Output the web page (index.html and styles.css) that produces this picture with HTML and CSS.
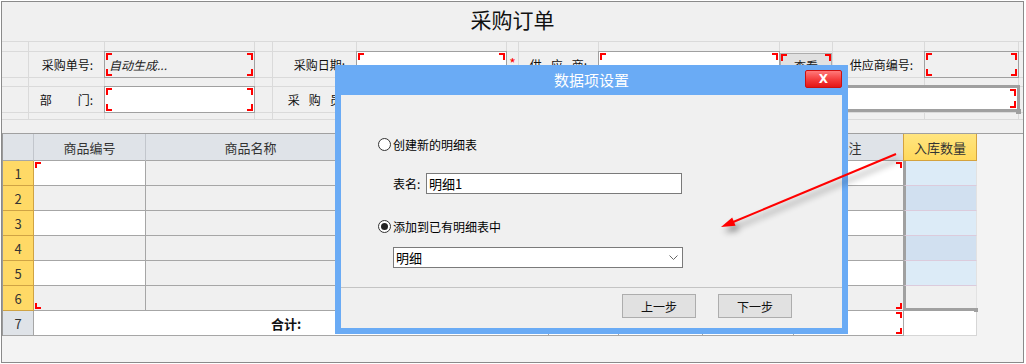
FILE: index.html
```html
<!DOCTYPE html>
<html lang="zh-CN">
<head>
<meta charset="utf-8">
<title>采购订单</title>
<link rel="stylesheet" href="styles.css">
</head>
<body>
<div class="frame">
  <div class="title">采购订单</div>

  <div class="form">
    <div class="c"></div><div class="c"></div><div class="c"></div><div class="c"></div><div class="c"></div><div class="c"></div><div class="c"></div><div class="c"></div><div class="c"></div><div class="c"></div><div class="c"></div><div class="c"></div><div class="c"></div>

    <div class="c"></div>
    <div class="lbl">采购单号:</div>
    <div class="inp ro"><i class="cn tl"></i><i class="cn tr"></i><i class="cn bl"></i><i class="cn br"></i><em class="auto">自动生成...</em></div>
    <div class="c"></div>
    <div class="lbl">采购日期:</div>
    <div class="inp"><i class="cn tl"></i><i class="cn tr"></i><i class="cn bl"></i><i class="cn br"></i></div>
    <div class="c ast">*</div>
    <div class="lbl"><span class="ls9">供应</span>商:</div>
    <div class="inp"><i class="cn tl"></i><i class="cn tr"></i><i class="cn bl"></i><i class="cn br"></i></div>
    <div class="c pad"><div class="btn"><i class="cn tl edge"></i><i class="cn tr edge"></i><i class="cn bl edge"></i><i class="cn br edge"></i>查看</div></div>
    <div class="lbl">供应商编号:</div>
    <div class="inp ro"><i class="cn tl"></i><i class="cn tr"></i><i class="cn bl"></i><i class="cn br"></i></div>
    <div class="c"></div>

    <div class="c"></div><div class="c"></div><div class="c"></div><div class="c"></div><div class="c"></div><div class="c"></div><div class="c"></div><div class="c"></div><div class="c"></div><div class="c"></div><div class="c"></div><div class="c"></div><div class="c"></div>

    <div class="c"></div>
    <div class="lbl"><span class="ls26">部</span>门:</div>
    <div class="inp"><i class="cn tl"></i><i class="cn tr"></i><i class="cn bl"></i><i class="cn br"></i></div>
    <div class="c"></div>
    <div class="lbl"><span class="ls9">采购</span>员:</div>
    <div class="inp"><i class="cn tl"></i><i class="cn tr"></i><i class="cn bl"></i><i class="cn br"></i></div>
    <div class="c"></div>
    <div class="inp sel"><i class="cn tl"></i><i class="cn tr"></i><i class="cn bl"></i><i class="cn br"></i><i class="handle"></i></div>
    <div class="c"></div>

    <div class="c"></div><div class="c"></div><div class="c"></div><div class="c"></div><div class="c"></div><div class="c"></div><div class="c"></div><div class="c"></div><div class="c"></div><div class="c"></div><div class="c"></div><div class="c"></div><div class="c"></div>
  </div>

  <div class="grid">
    <div class="g hd"></div><div class="g hd">商品编号</div><div class="g hd">商品名称</div><div class="g hd"></div><div class="g hd"></div><div class="g hd"></div><div class="g hd"></div><div class="g hd"></div><div class="g hd">备注</div><div class="g hdy">入库数量</div>

    <div class="g rn">1</div><div class="g w"><i class="cn tl"></i></div><div class="g gr"></div><div class="g w"></div><div class="g w"></div><div class="g w"></div><div class="g w"></div><div class="g w"></div><div class="g w"><i class="cn tr"></i></div><div class="g q qa"></div>
    <div class="g rn">2</div><div class="g gr"></div><div class="g gr"></div><div class="g gr"></div><div class="g gr"></div><div class="g gr"></div><div class="g gr"></div><div class="g gr"></div><div class="g gr"></div><div class="g q qb"></div>
    <div class="g rn">3</div><div class="g w"></div><div class="g gr"></div><div class="g w"></div><div class="g w"></div><div class="g w"></div><div class="g w"></div><div class="g w"></div><div class="g w"></div><div class="g q qa"></div>
    <div class="g rn">4</div><div class="g gr"></div><div class="g gr"></div><div class="g gr"></div><div class="g gr"></div><div class="g gr"></div><div class="g gr"></div><div class="g gr"></div><div class="g gr"></div><div class="g q qb"></div>
    <div class="g rn">5</div><div class="g w"></div><div class="g gr"></div><div class="g w"></div><div class="g w"></div><div class="g w"></div><div class="g w"></div><div class="g w"></div><div class="g w"></div><div class="g q qa"></div>
    <div class="g rn">6</div><div class="g gr"><i class="cn bl"></i></div><div class="g gr"></div><div class="g gr"></div><div class="g gr"></div><div class="g gr"></div><div class="g gr"></div><div class="g gr"></div><div class="g gr"><i class="cn br"></i></div><div class="g q qc"><i class="handle2"></i></div>
    <div class="g rn rn7">7</div><div class="g w sum">合计:</div><div class="g w"></div><div class="g w"></div><div class="g w"></div><div class="g w"><i class="cn tr"></i><i class="cn br"></i></div><div class="g tw"></div>
  </div>

  <div class="bottom"></div>
</div>

<div class="dialog">
  <div class="dlg-title">
    <span></span>
    <span class="dlg-caption">数据项设置</span>
    <span class="dlg-close">X</span>
  </div>
  <div class="dlg-body">
    <div class="dlg-content">
      <div class="radio-row"><span class="radio"></span>创建新的明细表</div>
      <div class="field-row"><span class="field-lbl">表名:</span><span class="textbox">明细1</span></div>
      <div class="radio-row second"><span class="radio on"></span>添加到已有明细表中</div>
      <div class="select">明细<svg class="chev" width="9" height="5" viewBox="0 0 9 5"><polyline points="0.5,0.5 4.5,4.5 8.5,0.5" fill="none" stroke="#666" stroke-width="1"/></svg></div>
    </div>
    <div class="dlg-footer"><span class="dbtn">上一步</span><span class="dbtn">下一步</span></div>
  </div>
</div>

<svg class="arrow" width="1026" height="364" viewBox="0 0 1026 364">
  <line x1="896" y1="154" x2="732" y2="222.5" stroke="#ff0000" stroke-width="2"/>
  <polygon points="721,227 735.6,225.8 732.2,217.4" fill="#ff0000"/>
</svg>
</body>
</html>
```

FILE: styles.css
```css
* { box-sizing: border-box; }
html, body { margin: 0; padding: 0; background: #fff; }
body {
  position: relative;
  width: 1026px;
  height: 364px;
  overflow: hidden;
  font-family: "Noto Sans CJK SC", "Noto Sans", sans-serif;
  font-size: 12px;
  color: #1a1a1a;
}

.frame {
  margin: 1px 0 0 1px;
  width: 1023px;
  height: 362px;
  border: 1px solid #8a8a8a;
  background: #f0f0f0;
  display: flex;
  flex-direction: column;
}

.title {
  flex: none;
  height: 39px;
  line-height: 34px;
  text-align: center;
  font-size: 21px;
  color: #111;
}

/* ---------- form grid ---------- */
.form {
  flex: none;
  display: grid;
  grid-template-columns: 26px 75px 149px 17px 83px 149px 11px 79px 180px 52px 91px 93px 4px;
  grid-template-rows: 9px 25px 8px 25px 6px;
  gap: 1px;
  padding: 1px 0;
  background: #dadada;
}
.c { background: #f0f0f0; }
.c.pad { padding-top: 1px; }
.lbl {
  background: #f0f0f0;
  display: flex;
  align-items: center;
  justify-content: flex-end;
  padding-right: 11px;
  white-space: nowrap;
  color: #111;
}
.ls9 { letter-spacing: 9px; }
.ls26 { letter-spacing: 26px; }
.ast {
  color: #ff0000;
  font-size: 14px;
  line-height: 14px;
  text-align: center;
  padding-top: 4px;
}

.inp {
  position: relative;
  margin: -1px;
  border: 1px solid #a0a0a0;
  background: #fff;
  display: flex;
  align-items: center;
  padding-left: 4px;
}
.inp.ro { background: #f0f0f0; }
.auto { font-style: italic; color: #222; }
.inp.sel {
  grid-column: span 5;
  margin: -2px -2px 0 -1px;
  border: 3px solid #a0a0a0;
}
.handle {
  position: absolute;
  right: -4px;
  bottom: -5px;
  width: 5px;
  height: 5px;
  background: #a0a0a0;
}

.btn {
  position: relative;
  height: 100%;
  border: 1px solid #adadad;
  background: #e1e1e1;
  display: flex;
  align-items: center;
  justify-content: center;
  color: #222;
}

/* red corner marks */
.cn {
  position: absolute;
  width: 6px;
  height: 7px;
  border: 0 solid #ff0000;
}
.tl { top: 1px; left: 1px; border-top-width: 2px; border-left-width: 2px; }
.tr { top: 1px; right: 1px; border-top-width: 2px; border-right-width: 2px; }
.bl { bottom: 1px; left: 1px; border-bottom-width: 2px; border-left-width: 2px; }
.br { bottom: 1px; right: 1px; border-bottom-width: 2px; border-right-width: 2px; }
.cn.edge.tl, .cn.edge.tr { top: 0; }
.cn.edge.bl, .cn.edge.br { bottom: 0; }
.cn.edge.tl, .cn.edge.bl { left: 0; }
.cn.edge.tr, .cn.edge.br { right: 0; }

/* ---------- detail table ---------- */
.grid {
  flex: none;
  margin-top: 13px;
  display: grid;
  grid-template-columns: 31px 112px 210px 93px 100px 70px 84px 91px 110px 73px;
  grid-template-rows: 27px repeat(7, 25px);
  border-top: 1px solid #a0a0a0;
  border-left: 1px solid #9a9a9a;
  background: #f3f3f3;
}
.g {
  position: relative;
  border-right: 1px solid #a6a6a6;
  border-bottom: 1px solid #a6a6a6;
}
.g .cn { width: 6px; height: 6px; }
.hd {
  background: #dfe3e8;
  border-right-color: #c2c6cc;
  border-bottom-color: #a6a6a6;
  color: #333;
  font-size: 13px;
  display: flex;
  align-items: center;
  justify-content: center;
}
.hdy {
  margin-left: -1px;
  border: 1px solid #d4a23e;
  border-top: 0;
  background: linear-gradient(#ffe580, #ffd95c);
  color: #333;
  font-size: 13px;
  display: flex;
  align-items: center;
  justify-content: center;
}
.rn {
  background: #ffd966;
  border-right-color: #cfa344;
  border-bottom-color: #cfa344;
  color: #333;
  font-size: 13px;
  display: flex;
  align-items: center;
  justify-content: center;
}
.rn7 {
  background: #dfe3e8;
  border-right-color: #a6a6a6;
  border-bottom-color: #a6a6a6;
}
.w { background: #fff; }
.gr { background: #f0f0f0; }
.sum {
  grid-column: span 4;
  display: flex;
  align-items: center;
  justify-content: flex-start;
  padding-left: 237px;
  font-weight: bold;
  font-size: 13px;
  color: #111;
}
.q {
  margin-left: -1px;
  border-left: 3px solid #a0a0a0;
  border-right-color: #e2e2e2;
  border-bottom-color: #dccbdc;
}
.qa { background: #dcebf7; }
.qb { background: #d1e0f0; }
.qc {
  z-index: 1;
  background: #f0f0f0;
  border-bottom: 3px solid #a0a0a0;
}
.handle2 {
  position: absolute;
  right: -2px;
  bottom: -4px;
  width: 4px;
  height: 4px;
  background: #a0a0a0;
}
.tw {
  background: #fff;
  border-right-color: #d6d6d6;
  border-bottom-color: #d6d6d6;
}

.bottom { flex: 1; background: #f3f3f3; }

/* ---------- dialog ---------- */
.dialog {
  position: absolute;
  left: 335px;
  top: 65px;
  width: 513px;
  height: 269px;
  padding: 0 6px 6px 6px;
  background: #6aabf5;
  display: flex;
  flex-direction: column;
  z-index: 5;
}
.dlg-title {
  flex: none;
  height: 30px;
  display: grid;
  grid-template-columns: 1fr auto 1fr;
  align-items: center;
}
.dlg-caption {
  color: #fff;
  font-size: 15px;
  line-height: 30px;
}
.dlg-close {
  justify-self: end;
  align-self: start;
  margin-top: 5px;
  width: 37px;
  height: 18px;
  border: 1px solid #cc1010;
  border-radius: 2px;
  background: linear-gradient(#ff7a7a, #f43b3b 55%, #e41616);
  color: #fff;
  font-family: "DejaVu Sans", sans-serif;
  font-weight: bold;
  font-size: 12px;
  display: flex;
  align-items: center;
  justify-content: center;
}
.dlg-body {
  flex: 1;
  background: #f0f0f0;
  display: flex;
  flex-direction: column;
}
.dlg-content {
  flex: none;
  height: 192px;
  padding: 39px 0 0 37px;
  color: #000;
}
.radio-row {
  height: 20px;
  display: flex;
  align-items: center;
}
.radio-row.second { margin-top: 22px; }
.radio {
  width: 13px;
  height: 13px;
  margin-right: 2px;
  border: 1px solid #333;
  border-radius: 50%;
  background: #fff;
  display: flex;
  align-items: center;
  justify-content: center;
}
.radio.on::after {
  content: "";
  width: 7px;
  height: 7px;
  border-radius: 50%;
  background: #222;
}
.field-row {
  margin: 19px 0 0 15px;
  height: 21px;
  display: flex;
  align-items: center;
}
.field-lbl { width: 33px; }
.textbox {
  width: 256px;
  height: 21px;
  border: 1px solid #7a7a7a;
  background: #fff;
  padding-left: 2px;
  font-size: 13px;
  line-height: 19px;
}
.select {
  margin: 11px 0 0 15px;
  width: 290px;
  height: 21px;
  border: 1px solid #7a7a7a;
  background: #fff;
  padding: 0 4px 0 2px;
  font-size: 13px;
  display: flex;
  align-items: center;
}
.chev { margin-left: auto; }
.dlg-footer {
  flex: 1;
  border-top: 1px solid #c4c4c4;
  display: flex;
  justify-content: flex-end;
  align-items: flex-start;
  gap: 22px;
  padding: 6px 50px 0 0;
}
.dbtn {
  width: 74px;
  height: 24px;
  border: 1px solid #adadad;
  background: #e1e1e1;
  display: flex;
  align-items: center;
  justify-content: center;
  color: #111;
}

/* ---------- annotation arrow ---------- */
.arrow {
  position: absolute;
  left: 0;
  top: 0;
  z-index: 10;
  pointer-events: none;
  filter: drop-shadow(3px 5px 3px rgba(0, 0, 0, 0.45));
}
```
